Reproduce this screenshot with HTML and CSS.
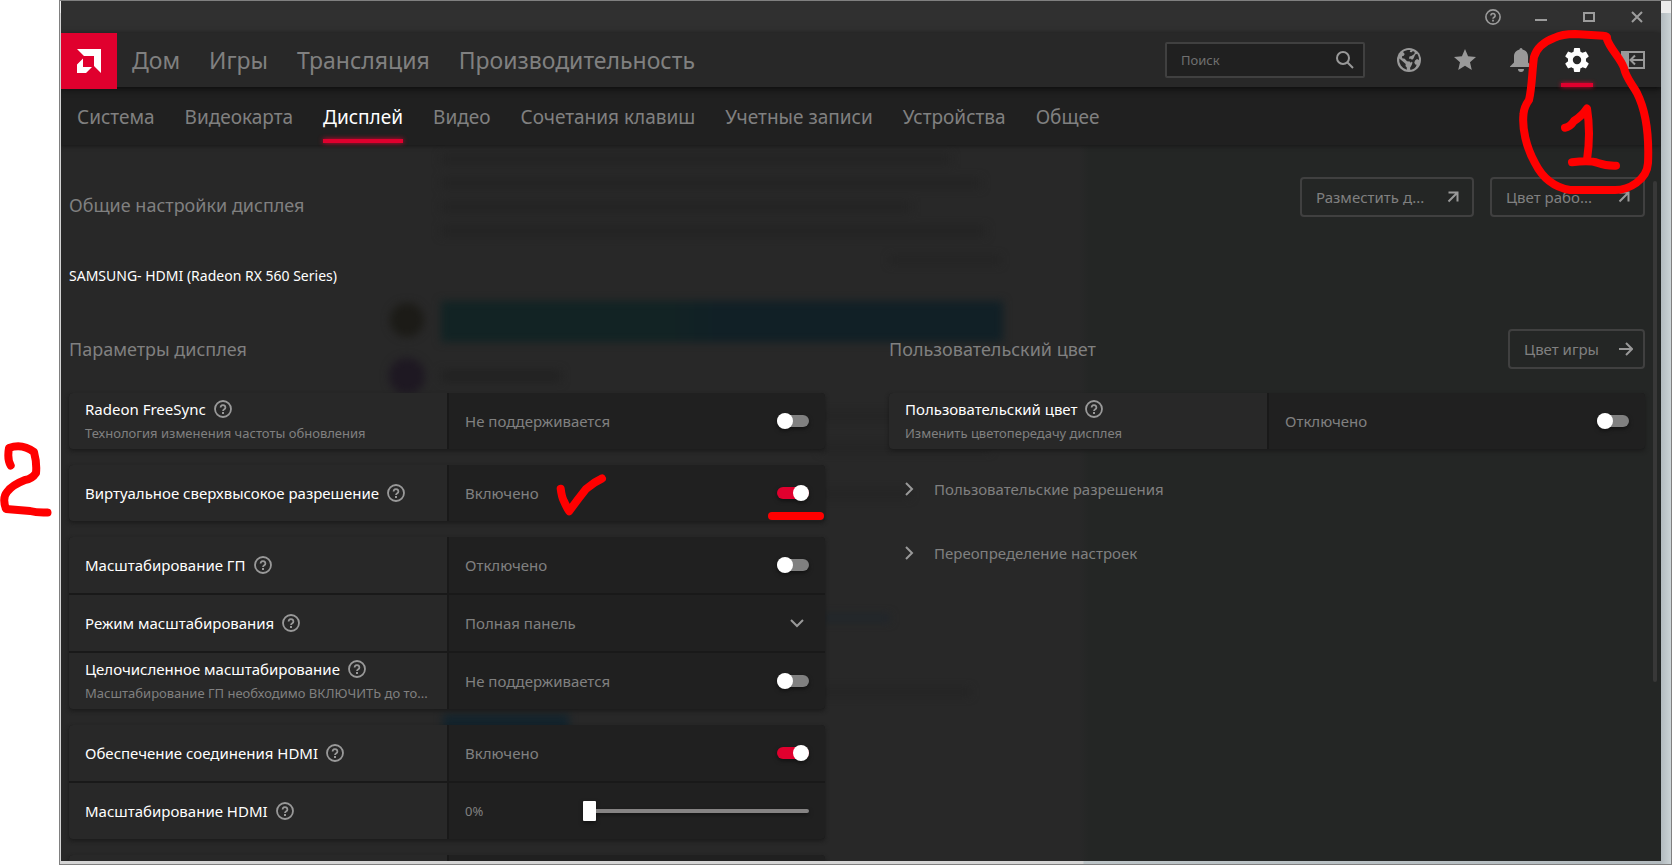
FILE: index.html
```html
<!DOCTYPE html>
<html lang="ru">
<head>
<meta charset="utf-8">
<title>Radeon Software</title>
<link rel="stylesheet" href="styles.css">
</head>
<body>
<svg class="defs" aria-hidden="true">
  <symbol id="help" viewBox="0 0 18 18"><circle cx="9" cy="9" r="8" fill="none" stroke="currentColor" stroke-width="1.8"/><path d="M6.600 7.400a2.400 2.300 0 1 1 3.700 1.900C9.400 9.900 9 10.200 9 11" fill="none" stroke="currentColor" stroke-width="1.8"/><path d="M8 12h2v2H8z" fill="currentColor"/></symbol>
  <symbol id="out" viewBox="0 0 12 12"><path d="M1.500 1.500h9v9M10.500 1.500L1.500 10.500" fill="none" stroke="currentColor" stroke-width="2"/></symbol>
  <symbol id="chev" viewBox="0 0 14 14"><path d="M4 1l6 6-6 6" fill="none" stroke="currentColor" stroke-width="2"/></symbol>
</svg>
<div class="frame">
<div class="app">
  <header>
    <div class="titlebar">
      <button aria-label="Справка"><svg width="16" height="16"><use href="#help"/></svg></button>
      <button aria-label="Свернуть"><svg width="12" height="12"><path d="M0 8h12v2H0z" fill="currentColor"/></svg></button>
      <button aria-label="Развернуть"><svg width="12" height="10"><path d="M1 1h10v8H1z" fill="none" stroke="currentColor" stroke-width="2"/></svg></button>
      <button aria-label="Закрыть"><svg width="12" height="12"><path d="M1 1l10 10M11 1L1 11" stroke="currentColor" stroke-width="2"/></svg></button>
    </div>
    <div class="mainbar">
      <a class="logo" href="#" aria-label="AMD"><svg width="24" height="24" viewBox="0 0 24 24" fill="#fff"><path d="M0 0h24v24l-7-7V7H7z"/><path d="M6 9.500V18h9l-6 6H0v-8.500z"/></svg></a>
      <nav class="primary">
        <a href="#">Дом</a><a href="#">Игры</a><a href="#">Трансляция</a><a href="#">Производительность</a>
      </nav>
      <div class="search">
        <input type="text" placeholder="Поиск" aria-label="Поиск">
        <svg width="18" height="18" viewBox="0 0 18 18" fill="none" stroke="currentColor" stroke-width="2"><circle cx="7" cy="7" r="6"/><path d="M11.500 11.500l5.500 5.500"/></svg>
      </div>
      <div class="tools">
        <button aria-label="Интернет"><svg width="24" height="24" viewBox="0 0 24 24"><circle cx="12" cy="12" r="12" fill="currentColor"/><g fill="#282828"><path d="M2.300 10.500L7 14.500l1.700 1.400-.2 2 1.300 1.600v2.300A10 10 0 0 1 2.300 10.500z"/><path d="M6 3.900c2-1.300 4.800-2 7.500-1.800l-.8 2 2 .2 1.200-1.400 1.800 1-.3 2-3 2-2 .7-.4 2.200h2l1.700 2-2 2-1-1.200-2.700-.3-2.300-2.500-2.500-.6-.2-2 1.800-.5.9-1.800z"/><path d="M18.200 6.500l2-.7c1.300 1.800 1.900 3.800 1.800 6.200l-2-1-2 1.400-.7 2.400 1 1.700 1.400.2-1 2.200c-1.600 1.700-3.300 2.600-5.200 3l-.5-1.900 1.700-3 .8-2.200-1.200-2.400 2.200-2z"/></g></svg></button>
        <button aria-label="Избранное"><svg width="22" height="22" viewBox="2 2 20 20" fill="currentColor"><path d="M12 17.270L18.180 21l-1.640-7.030L22 9.240l-7.190-.61L12 2 9.190 8.630 2 9.240l5.460 4.730L5.820 21z"/></svg></button>
        <button aria-label="Уведомления"><svg width="24" height="24" viewBox="0 0 24 24" fill="currentColor"><path d="M10.500 1.500a1.500 1.500 0 0 1 3 0c3.500.8 5.500 3.500 5.500 7v6l4 4V19H1v-.5l4-4v-6c0-3.500 2-6.200 5.500-7zM9 21h6a3 3 0 0 1-6 0z"/></svg></button>
        <button class="on" aria-label="Настройки"><svg width="24" height="24" viewBox="2 2 20 20" fill="currentColor"><path d="M19.430 12.980c.04-.32.07-.64.07-.98s-.03-.66-.07-.98l2.110-1.650c.19-.15.24-.42.12-.64l-2-3.460c-.12-.22-.39-.3-.61-.22l-2.490 1c-.52-.4-1.080-.73-1.690-.98l-.38-2.650C14.460 2.180 14.250 2 14 2h-4c-.25 0-.46.18-.49.42l-.38 2.650c-.61.25-1.170.59-1.690.98l-2.490-1c-.23-.09-.49 0-.61.22l-2 3.460c-.13.22-.07.49.12.64l2.110 1.650c-.04.32-.07.65-.07.98s.03.66.07.98l-2.110 1.650c-.19.15-.24.42-.12.64l2 3.460c.12.22.39.3.61.22l2.490-1c.52.4 1.080.73 1.690.98l.38 2.650c.03.24.24.42.49.42h4c.25 0 .46-.18.49-.42l.38-2.650c.61-.25 1.170-.59 1.690-.98l2.490 1c.23.09.49 0 .61-.22l2-3.460c.12-.22.07-.49-.12-.64l-2.110-1.650zM12 15.500a3.500 3.500 0 1 1 0-7 3.500 3.500 0 0 1 0 7z"/></svg></button>
        <button aria-label="Выход"><svg width="24" height="18" viewBox="0 0 24 18"><path d="M0 0h8v18H0z" fill="currentColor"/><path d="M7 1h16v16H7M22 9H9.500M14 4.500L9.500 9l4.500 4.500" fill="none" stroke="currentColor" stroke-width="2"/></svg></button>
      </div>
    </div>
    <nav class="tabs">
      <a href="#">Система</a><a href="#">Видеокарта</a><a class="on" href="#">Дисплей</a><a href="#">Видео</a><a href="#">Сочетания клавиш</a><a href="#">Учетные записи</a><a href="#">Устройства</a><a href="#">Общее</a>
    </nav>
  </header>
  <main>
    <svg class="ghost" width="1100" height="716" viewBox="61 145 1100 716" aria-hidden="true">
      <defs>
        <filter id="b" x="-20%" y="-50%" width="140%" height="200%" color-interpolation-filters="sRGB"><feGaussianBlur stdDeviation="4"/></filter>
        <linearGradient id="g"><stop offset=".4" stop-color="#122324"/><stop offset=".5" stop-color="#112026"/></linearGradient>
      </defs>
      <g filter="url(#b)">
        <path d="M441 154h510v10H441zM441 178h540v10H441zM441 202h470v10H441zM441 226h545v10H441zM890 256h110v8H890z" fill="#242424"/>
        <path d="M441 301h562v41H441z" fill="url(#g)"/>
        <circle cx="407" cy="320" r="17" fill="#1c1b17"/><circle cx="407" cy="376" r="18" fill="#1e1822"/>
        <path d="M441 370h120v12H441z" fill="#222"/>
        <path d="M820 412h120v8H820zM820 444h170v8H820zM820 490h90v8H820zM820 688h150v8H820z" fill="#242424"/>
        <path d="M820 614h70v8h-70z" fill="#20262c"/><path d="M443 714h126v30H443z" fill="#13232c"/>
      </g>
    </svg>
    <section class="top">
      <h2>Общие настройки дисплея</h2>
      <button class="box wide"><span>Разместить д...</span><svg width="12" height="12"><use href="#out"/></svg></button>
      <button class="box mid"><span>Цвет рабо...</span><svg width="12" height="12"><use href="#out"/></svg></button>
    </section>
    <p class="device">SAMSUNG- HDMI (Radeon RX 560 Series)</p>
    <div class="cols">
      <section>
        <div class="head"><h2>Параметры дисплея</h2></div>
        <div class="card">
          <div class="row"><div class="name"><label for="fs">Radeon FreeSync <svg><use href="#help"/></svg></label><small>Технология изменения частоты обновления</small></div><div class="val"><span>Не поддерживается</span><input id="fs" type="checkbox"></div></div>
        </div>
        <div class="card">
          <div class="row"><div class="name"><label for="vsr">Виртуальное сверхвысокое разрешение <svg><use href="#help"/></svg></label></div><div class="val"><span>Включено</span><input id="vsr" type="checkbox" checked>
            <svg class="ink tick" width="56" height="48" viewBox="553 471 56 48"><path d="M560.700 488.700q1 8 3 12 3 7 5.500 10.500Q578 499 586 489q8-7 16-10.500"/></svg>
            <svg class="ink under" width="60" height="10" viewBox="0 0 60 10"><path d="M7 5h48"/></svg></div></div>
        </div>
        <div class="card">
          <div class="row"><div class="name"><label for="gp">Масштабирование ГП <svg><use href="#help"/></svg></label></div><div class="val"><span>Отключено</span><input id="gp" type="checkbox"></div></div>
          <div class="row"><div class="name"><label for="mode">Режим масштабирования <svg><use href="#help"/></svg></label></div><div class="val"><select id="mode"><option>Полная панель</option></select><svg class="down" width="14" height="14"><use href="#chev"/></svg></div></div>
          <div class="row"><div class="name"><label for="int">Целочисленное масштабирование <svg><use href="#help"/></svg></label><small>Масштабирование ГП необходимо ВКЛЮЧИТЬ до то...</small></div><div class="val"><span>Не поддерживается</span><input id="int" type="checkbox"></div></div>
        </div>
        <div class="card">
          <div class="row"><div class="name"><label for="hd">Обеспечение соединения HDMI <svg><use href="#help"/></svg></label></div><div class="val"><span>Включено</span><input id="hd" type="checkbox" checked></div></div>
          <div class="row"><div class="name"><label for="sc">Масштабирование HDMI <svg><use href="#help"/></svg></label></div><div class="val"><output for="sc">0%</output><input id="sc" type="range" min="0" max="10" value="0"></div></div>
        </div>
        <div class="card"><div class="row"><div class="name"></div><div class="val"></div></div></div>
      </section>
      <section>
        <div class="head"><h2>Пользовательский цвет</h2><button class="box small"><span>Цвет игры</span><svg width="14" height="14" viewBox="0 0 14 14"><path d="M0 7h12M7 1l6 6-6 6" fill="none" stroke="currentColor" stroke-width="2"/></svg></button></div>
        <div class="card">
          <div class="row"><div class="name"><label for="cc">Пользовательский цвет <svg><use href="#help"/></svg></label><small>Изменить цветопередачу дисплея</small></div><div class="val"><span>Отключено</span><input id="cc" type="checkbox"></div></div>
        </div>
        <button class="fold"><svg width="14" height="14"><use href="#chev"/></svg>Пользовательские разрешения</button>
        <button class="fold"><svg width="14" height="14"><use href="#chev"/></svg>Переопределение настроек</button>
      </section>
    </div>
    <div class="scroll"></div>
  </main>
</div>
</div>
<svg class="ink one" width="160" height="200" viewBox="1512 0 160 200"><path d="M1607 39Q1608 36 1603 35.700L1575 34Q1562 34 1554 38 1538 44 1534 57C1532 72 1532 88 1529 100Q1524 107 1523.500 114C1522 128 1526 147 1535 163 1541 175 1552 187 1570 190L1615 190C1629 190 1647 180 1648 163 1649 140 1648 115 1637 93 1632 84 1626 78 1624 68 1620 57 1610 49 1607 39M1565 127.700Q1570 127 1574 121 1582 116 1587 108.500 1591 133 1587 160M1572 162.300Q1590 160 1598 163 1606 166 1616 165.700"/></svg>
<svg class="ink two" width="56" height="90" viewBox="0 435 56 90"><path d="M10.700 465.500Q7 459 9 448 22 443 34 452 37 463 36 473 32 479 25 480 12 485 7 492 2 498 6 509 18 510 30 511 37 513 47.500 512.500"/></svg>
</body>
</html>
```
FILE: styles.css
```css
* { box-sizing: border-box; }
body { margin: 0; height: 100vh; overflow: hidden; position: relative; background: #fff; color: #808080; font: 15px/20px "Noto Sans", "Open Sans", sans-serif; }
.defs { display: none; }
svg { display: block; flex: none; }
button { font: inherit; color: inherit; background: none; border: 0; padding: 0; cursor: pointer; }
a { color: inherit; text-decoration: none; }
h2 { margin: 0; font-size: 18px; line-height: 24px; font-weight: 400; }

.frame { height: 100vh; margin-left: 59px; padding: 0 10px 3px 1px; border: 1px solid #808080; background: linear-gradient(#ececec 12px, transparent 12px), linear-gradient(90deg, #d4d4d4 1023px, #bcc4c7 1024px, #b3bbbf calc(100% - 10px), #cbd3d6 100%); }
.app { height: 100%; display: flex; flex-direction: column; overflow: hidden; background: #282828; }
header { position: relative; z-index: 1; }

.titlebar { height: 32px; display: flex; justify-content: flex-end; background: #303030; color: #9c9c9c; }
.titlebar button { width: 48px; display: grid; place-items: center; }

.mainbar { height: 54px; display: flex; align-items: center; background: #282828; box-shadow: 0 2px 6px #0c0c0c; position: relative; }
.logo { width: 56px; height: 56px; align-self: flex-start; display: grid; place-items: center; background: #e0002e; }
.primary { display: flex; gap: 29px; margin-left: 15px; font-size: 23px; line-height: 32px; flex: 1; }
.search { width: 200px; height: 36px; display: flex; align-items: center; padding-right: 9px; border: 2px solid #404040; border-radius: 2px; background: #202020; color: #999; }
.search input { flex: 1; min-width: 0; height: 100%; padding: 0 14px; font: 13px "Noto Sans", sans-serif; background: none; border: 0; color: #ccc; }
.search input::placeholder { color: #707070; }
.tools { display: flex; align-self: stretch; margin-left: 16px; color: #999; }
.tools button { width: 56px; display: grid; place-items: center; position: relative; }
.tools .on { color: #fff; }
.tools .on::after { content: ""; position: absolute; bottom: 0; left: 12px; right: 12px; height: 4px; background: #e0002e; box-shadow: 0 0 4px #e0002e; }

.tabs { height: 58px; display: flex; gap: 30px; padding-left: 16px; font-size: 19px; line-height: 60px; background: #202020; box-shadow: 0 1px 4px #161616; }
.tabs .on { color: #fff; position: relative; }
.tabs .on::after { content: ""; position: absolute; left: 0; right: 0; bottom: 2px; height: 4px; background: #e0002e; box-shadow: 0 0 5px #e0002e; }

main { flex: 1; min-height: 0; overflow: hidden; position: relative; padding: 32px 16px 0 8px; background: linear-gradient(90deg, #282828 1018px, #242625 1028px); }
.ghost { position: absolute; left: 0; top: 0; }
.top, .device, .cols { position: relative; }
.top { display: flex; gap: 16px; align-items: center; }
.top h2 { flex: 1; padding-top: 16px; }
.box { height: 40px; display: flex; align-items: center; justify-content: space-between; gap: 20px; padding: 0 13px 0 14px; border: 2px solid #404040; border-radius: 4px; white-space: nowrap; }
.box svg { color: #999; }
.wide { width: 174px; }
.mid { width: 155px; }
.small { padding-right: 10px; }
.device { margin: 49px 0 43px; color: #fff; font-size: 14px; }

.cols { display: grid; grid-template-columns: 1fr 1fr; column-gap: 64px; }
.cols section { min-width: 0; }
.head { height: 40px; margin-bottom: 24px; display: flex; align-items: center; justify-content: space-between; }
.card { display: grid; gap: 2px; margin-bottom: 16px; border-radius: 4px; background: #191919; box-shadow: 0 2px 4px #1a1a1a; overflow: hidden; }
.row { height: 56px; display: grid; grid-template-columns: 50% minmax(0, 1fr); gap: 2px; }
.name { min-width: 0; padding: 0 16px; display: flex; flex-direction: column; justify-content: center; gap: 4px; background: #282828; }
.name label { display: flex; align-items: center; gap: 8px; color: #fff; white-space: nowrap; }
.name label svg { width: 18px; height: 18px; color: #999; }
.name small { font-size: 13px; line-height: 20px; white-space: nowrap; }
.val { position: relative; min-width: 0; padding: 0 16px; display: flex; align-items: center; justify-content: space-between; background: #202020; }

input[type=checkbox] { appearance: none; width: 32px; height: 16px; margin: 0; display: flex; align-items: center; position: relative; filter: drop-shadow(0 2px 2px #111); }
input[type=checkbox]::before { content: ""; width: 32px; height: 12px; border-radius: 6px; background: #808080; }
input[type=checkbox]::after { content: ""; position: absolute; left: 0; width: 16px; height: 16px; border-radius: 50%; background: #fff; }
input[type=checkbox]:checked::before { background: #e0002e; }
input[type=checkbox]:checked::after { left: 16px; }
select { appearance: none; flex: 1; height: 100%; padding: 0; font: inherit; color: inherit; background: none; border: 0; }
.down { position: absolute; right: 21px; transform: rotate(90deg); color: #999; pointer-events: none; }
output { font-size: 13px; }
input[type=range] { appearance: none; width: 226px; height: 20px; margin: 0; background: none; filter: drop-shadow(0 2px 2px #111); }
input[type=range]::-webkit-slider-runnable-track { height: 4px; border-radius: 2px; background: #858383; }
input[type=range]::-webkit-slider-thumb { appearance: none; width: 13px; height: 20px; margin-top: -8px; border-radius: 1px; background: #fff; }

.fold { height: 48px; margin-bottom: 16px; padding-left: 13px; display: flex; align-items: center; gap: 18px; }
.fold svg { color: #999; }
.scroll { position: absolute; right: 4px; top: 36px; width: 4px; height: 70%; border-radius: 2px; background: #383838; }

.ink { position: absolute; fill: none; stroke: #f00; stroke-width: 8; stroke-linecap: round; stroke-linejoin: round; pointer-events: none; }
.one { top: 0; right: 0; z-index: 2; }
.two { top: 435px; left: 0; }
.tick { left: 104px; top: 6px; }
.under { right: 0; bottom: 0; }
```
